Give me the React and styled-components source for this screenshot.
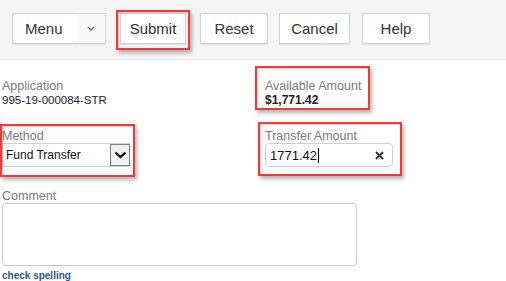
import styled, { createGlobalStyle } from "styled-components";

const GlobalStyle = createGlobalStyle`
  body {
    margin: 0;
    background: #ffffff;
    font-family: "Liberation Sans", Arial, sans-serif;
  }
`;

const App = () => {
  return (
    <>
      <GlobalStyle />
      <Toolbar>
        <MenuButton>
          <MenuLabel>Menu</MenuLabel>
          <MenuCaret>
            <svg width="8" height="5" viewBox="0 0 8 5">
              <path d="M1 1 L4 4 L7 1" fill="none" stroke="#666" strokeWidth="1.3" />
            </svg>
          </MenuCaret>
        </MenuButton>
        <Highlight $top={-3} $left={-4} $width={74} $height={40} $ml={14}>
          <Button $w={66}>Submit</Button>
        </Highlight>
        <Button $w={68} $ml={14}>Reset</Button>
        <Button $w={71} $ml={11}>Cancel</Button>
        <Button $w={68} $ml={12}>Help</Button>
      </Toolbar>

      <Form>
        <Field>
          <Label>Application</Label>
          <Value>995-19-000084-STR</Value>
        </Field>
        <Highlight $top={-13} $left={-10} $width={115} $height={44}>
          <Field>
            <Label>Available Amount</Label>
            <Value $bold>$1,771.42</Value>
          </Field>
        </Highlight>

        <Highlight $top={-5} $left={-2} $width={135} $height={53}>
          <Field>
            <Label>Method</Label>
            <SelectWrap>
              <Select defaultValue="ft">
                <option value="ft">Fund Transfer</option>
              </Select>
              <SelectArrow>
                <svg width="13" height="8" viewBox="0 0 13 8">
                  <path d="M1.5 1.5 L6.5 6 L11.5 1.5" fill="none" stroke="#000" strokeWidth="2.2" />
                </svg>
              </SelectArrow>
            </SelectWrap>
          </Field>
        </Highlight>
        <Highlight $top={-7} $left={-7} $width={144} $height={54}>
          <Field>
            <Label>Transfer Amount</Label>
            <InputBox>
              <InputText>1771.42</InputText>
              <Caret />
              <Clear>
                <svg width="9" height="9" viewBox="0 0 9 9">
                  <path d="M1 1 L8 8 M8 1 L1 8" stroke="#333" strokeWidth="1.8" />
                </svg>
              </Clear>
            </InputBox>
          </Field>
        </Highlight>

        <Wide>
          <Label>Comment</Label>
          <TextArea />
          <SpellLink href="#">check spelling</SpellLink>
        </Wide>
      </Form>
    </>
  );
};

export default App;

const Toolbar = styled.div`
  display: flex;
  align-items: flex-start;
  height: 60px;
  padding: 13px 0 0 12px;
  box-sizing: border-box;
  background: #f5f5f5;
  border-bottom: 1px solid #ebebeb;
`;

const Button = styled.button`
  width: ${(p) => p.$w}px;
  height: 31px;
  margin-left: ${(p) => p.$ml || 0}px;
  padding: 0;
  box-sizing: border-box;
  border: 1px solid #d4d4d4;
  background: #ffffff;
  box-shadow: 0 1px 1px rgba(0, 0, 0, 0.08);
  font-family: "Liberation Sans", Arial, sans-serif;
  font-size: 15px;
  color: #333333;
`;

const MenuButton = styled.div`
  display: flex;
  width: 94px;
  height: 31px;
  box-sizing: border-box;
  border: 1px solid #d4d4d4;
  background: #ffffff;
  box-shadow: 0 1px 1px rgba(0, 0, 0, 0.08);
`;

const MenuLabel = styled.div`
  flex: 1;
  padding-left: 12px;
  line-height: 29px;
  font-size: 15px;
  color: #333333;
`;

const MenuCaret = styled.div`
  width: 28px;
  display: flex;
  align-items: center;
  justify-content: center;
  background: #f9f9f9;
`;

const Highlight = styled.div`
  position: relative;
  margin-left: ${(p) => p.$ml || 0}px;

  &::after {
    content: "";
    position: absolute;
    top: ${(p) => p.$top}px;
    left: ${(p) => p.$left}px;
    width: ${(p) => p.$width}px;
    height: ${(p) => p.$height}px;
    box-sizing: border-box;
    border: 2px solid #f03a3a;
    box-shadow: 2px 3px 4px rgba(0, 0, 0, 0.3), inset 1px 1px 2px rgba(0, 0, 0, 0.2);
    pointer-events: none;
  }
`;

const Form = styled.div`
  display: grid;
  grid-template-columns: 263px 1fr;
  row-gap: 22px;
  padding: 19px 0 0 2px;
`;

const Field = styled.div`
  display: flex;
  flex-direction: column;
`;

const Label = styled.div`
  font-size: 12.5px;
  line-height: 14px;
  color: #7a7a7a;
`;

const Value = styled.div`
  font-size: ${(p) => (p.$bold ? 12 : 11.5)}px;
  font-weight: ${(p) => (p.$bold ? 700 : 400)};
  line-height: 14px;
  color: #1e1e1e;
`;

const SelectWrap = styled.div`
  position: relative;
  width: 128px;
  height: 24px;
`;

const Select = styled.select`
  appearance: none;
  width: 100%;
  height: 100%;
  margin: 0;
  padding: 0 0 0 3px;
  box-sizing: border-box;
  border: 1px solid #cfcfcf;
  border-radius: 0;
  background: #ffffff;
  font-family: "Liberation Sans", Arial, sans-serif;
  font-size: 12px;
  color: #111111;
`;

const SelectArrow = styled.div`
  position: absolute;
  top: 1px;
  right: 0;
  width: 20px;
  height: 22px;
  box-sizing: border-box;
  border: 1px solid #7d7d7d;
  background: #f0f0f0;
  display: flex;
  align-items: center;
  justify-content: center;
  pointer-events: none;
`;

const InputBox = styled.div`
  display: flex;
  align-items: center;
  width: 128px;
  height: 24px;
  box-sizing: border-box;
  padding: 0 8px 0 4px;
  border: 1px solid #d0d0d0;
  border-radius: 4px;
  background: #ffffff;
`;

const InputText = styled.span`
  font-size: 13px;
  color: #111111;
`;

const Caret = styled.span`
  width: 1px;
  height: 15px;
  margin-left: 1px;
  background: #000000;
`;

const Clear = styled.span`
  margin-left: auto;
  display: flex;
`;

const Wide = styled.div`
  grid-column: 1 / -1;
  display: flex;
  flex-direction: column;
  align-items: flex-start;
`;

const TextArea = styled.textarea`
  width: 355px;
  height: 63px;
  margin: 0;
  box-sizing: border-box;
  border: 1px solid #cccccc;
  border-radius: 4px;
  resize: none;
`;

const SpellLink = styled.a`
  margin-top: 4px;
  font-size: 10px;
  font-weight: 700;
  line-height: 12px;
  color: #2b5797;
  text-decoration: none;
`;
